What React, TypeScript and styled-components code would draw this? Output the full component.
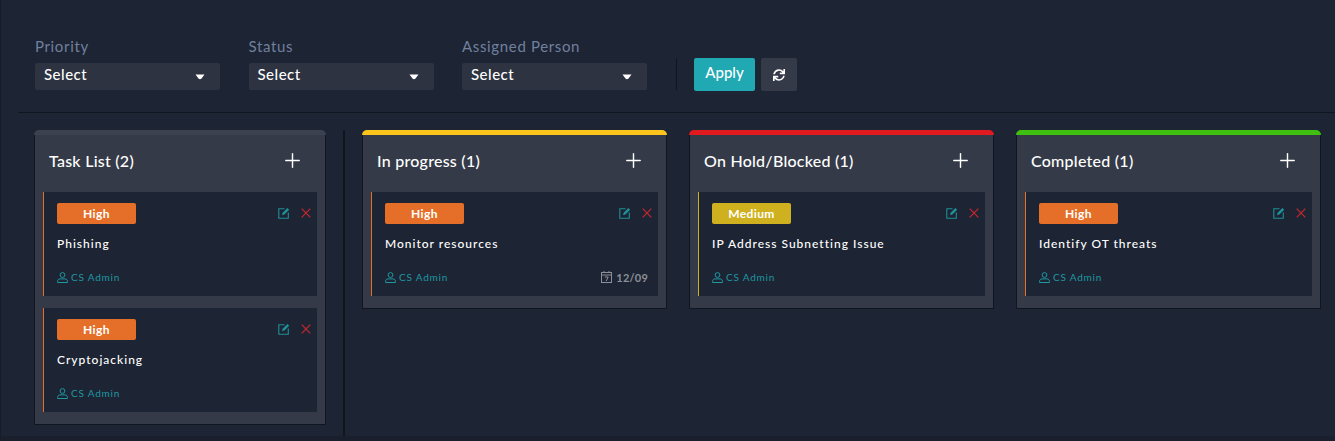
import styled, { createGlobalStyle } from "styled-components";
import { Plus } from "lucide-react";
import { FaSync } from "react-icons/fa";

const GlobalStyle = createGlobalStyle`
  html, body {
    margin: 0;
    padding: 0;
    background: #1d2433;
  }
  * {
    box-sizing: border-box;
  }
`;

const UserIcon = () => (
  <svg width="11" height="11" viewBox="0 0 11 11" fill="none" stroke="currentColor" strokeWidth="1">
    <circle cx="5.5" cy="3" r="2.4" />
    <path d="M0.6 10.5V9.2C0.6 7.8 1.7 6.9 3 6.9H8C9.3 6.9 10.4 7.8 10.4 9.2V10.5Z" strokeLinejoin="round" />
  </svg>
);

const EditIcon = () => (
  <svg width="12" height="12" viewBox="0 0 12 12" fill="none">
    <path d="M6.5 1.7H0.8V11.2H10.3V5.5" stroke="currentColor" strokeWidth="1.1" />
    <path d="M4 8.2L4.6 5.8L9.4 1L11.2 2.8L6.4 7.6Z" fill="currentColor" />
  </svg>
);

const CloseIcon = () => (
  <svg width="10" height="10" viewBox="0 0 10 10" fill="none">
    <path d="M0.7 0.7L9.3 9.3M9.3 0.7L0.7 9.3" stroke="currentColor" strokeWidth="1.2" />
  </svg>
);

const CalendarIcon = () => (
  <svg width="11" height="12" viewBox="0 0 11 12" fill="none" stroke="currentColor" strokeWidth="1">
    <rect x="0.5" y="1.5" width="10" height="10" />
    <path d="M0.5 4H10.5M3 0V2M8 0V2" />
    <path d="M3.8 6H7.2L5.2 10" />
  </svg>
);

const Caret = () => (
  <svg width="10" height="6" viewBox="0 0 10 6">
    <path d="M0.5 0.5H9.5L6.5 4.5Q5 6 3.5 4.5Z" fill="#ffffff" />
  </svg>
);

const filters = ["Priority", "Status", "Assigned Person"];

type Task = {
  title: string;
  priority: "High" | "Medium";
  due?: string;
};

type Column = {
  title: string;
  accent: string;
  width: number;
  tasks: Task[];
};

const columns: Column[] = [
  {
    title: "Task List (2)",
    accent: "#3c4250",
    width: 292,
    tasks: [
      { title: "Phishing", priority: "High" },
      { title: "Cryptojacking", priority: "High" },
    ],
  },
  {
    title: "In progress (1)",
    accent: "#fdc51c",
    width: 305,
    tasks: [{ title: "Monitor resources", priority: "High", due: "12/09" }],
  },
  {
    title: "On Hold/Blocked (1)",
    accent: "#e11a1f",
    width: 305,
    tasks: [{ title: "IP Address Subnetting Issue", priority: "Medium" }],
  },
  {
    title: "Completed (1)",
    accent: "#3fc010",
    width: 305,
    tasks: [{ title: "Identify OT threats", priority: "High" }],
  },
];

const priorityColor = (priority: Task["priority"]) => (priority === "High" ? "#e56f29" : "#cfb11f");

const TaskCard = ({ task }: { task: Task }) => (
  <Card $accent={priorityColor(task.priority)}>
    <CardTop>
      <Badge $color={priorityColor(task.priority)}>{task.priority}</Badge>
      <CardActions>
        <EditButton>
          <EditIcon />
        </EditButton>
        <DeleteButton>
          <CloseIcon />
        </DeleteButton>
      </CardActions>
    </CardTop>
    <CardTitle>{task.title}</CardTitle>
    <CardFooter>
      <Assignee>
        <UserIcon />
        <span>CS Admin</span>
      </Assignee>
      {task.due && (
        <DueDate>
          <CalendarIcon />
          <span>{task.due}</span>
        </DueDate>
      )}
    </CardFooter>
  </Card>
);

const BoardColumn = ({ column }: { column: Column }) => (
  <ColumnBox $width={column.width}>
    <ColumnAccent $accent={column.accent} />
    <ColumnBody>
      <ColumnHeader>
        <ColumnTitle>{column.title}</ColumnTitle>
        <AddButton>
          <Plus size={23} strokeWidth={1.5} />
        </AddButton>
      </ColumnHeader>
      <CardList>
        {column.tasks.map((task) => (
          <TaskCard key={task.title} task={task} />
        ))}
      </CardList>
    </ColumnBody>
  </ColumnBox>
);

export default function App() {
  const [first, ...rest] = columns;
  return (
    <>
      <GlobalStyle />
      <Page>
        <Main>
          <FilterBar>
            {filters.map((label) => (
              <Field key={label}>
                <FieldLabel>{label}</FieldLabel>
                <SelectBox>
                  <SelectText>Select</SelectText>
                  <Caret />
                </SelectBox>
              </Field>
            ))}
            <BarDivider />
            <ApplyButton>Apply</ApplyButton>
            <ResetButton>
              <FaSync size={12} />
            </ResetButton>
          </FilterBar>
          <Board>
            <BoardColumn column={first} />
            <BoardDivider />
            <Columns>
              {rest.map((column) => (
                <BoardColumn key={column.title} column={column} />
              ))}
            </Columns>
          </Board>
        </Main>
        <BottomBand />
      </Page>
    </>
  );
}

const Page = styled.div`
  width: 1335px;
  height: 441px;
  overflow: hidden;
  background: #1d2433;
  border-left: 1px solid #171c28;
  font-family: "Lato", "Liberation Sans", sans-serif;
`;

const Main = styled.main`
  margin-left: 17px;
`;

const BottomBand = styled.div`
  height: 5px;
  background: #191f2c;
`;

const FilterBar = styled.div`
  height: 113px;
  padding: 37px 0 0 17px;
  display: flex;
  align-items: flex-start;
  border-bottom: 1px solid #11151f;
`;

const Field = styled.div`
  width: 185px;
  margin-right: 28.5px;
  display: flex;
  flex-direction: column;
`;

const FieldLabel = styled.label`
  height: 18px;
  font-size: 15px;
  line-height: 18px;
  letter-spacing: 0.65px;
  color: #71809e;
`;

const SelectBox = styled.div`
  height: 27px;
  margin-top: 8px;
  padding: 0 15px 0 9px;
  display: flex;
  align-items: center;
  justify-content: space-between;
  background: #2d3340;
  border-radius: 2px;
`;

const SelectText = styled.span`
  padding-bottom: 6px;
  font-size: 15px;
  font-weight: 500;
  letter-spacing: 0.5px;
  color: #ffffff;
`;

const BarDivider = styled.div`
  width: 1px;
  height: 32px;
  margin: 21px 17px 0 0.5px;
  background: #11151f;
`;

const ApplyButton = styled.button`
  all: unset;
  box-sizing: border-box;
  width: 61px;
  height: 33px;
  margin-top: 21px;
  padding-bottom: 5px;
  display: flex;
  align-items: center;
  justify-content: center;
  background: #20a8b3;
  border-radius: 2px;
  font-size: 15px;
  font-weight: 500;
  color: #ffffff;
`;

const ResetButton = styled.button`
  all: unset;
  box-sizing: border-box;
  width: 36px;
  height: 33px;
  margin: 21px 0 0 6px;
  display: flex;
  align-items: center;
  justify-content: center;
  background: #343a48;
  border-radius: 2px;
  color: #ffffff;
`;

const Board = styled.div`
  height: 323px;
  padding: 17px 0 0 16px;
  display: flex;
  align-items: flex-start;
`;

const BoardDivider = styled.div`
  width: 2px;
  height: 306px;
  margin: 0 17px;
  background: #11151f;
`;

const Columns = styled.div`
  display: flex;
  align-items: flex-start;
  gap: 22px;
`;

const ColumnBox = styled.section<{ $width: number }>`
  width: ${({ $width }) => $width}px;
  display: flex;
  flex-direction: column;
`;

const ColumnAccent = styled.div<{ $accent: string }>`
  height: 5px;
  background: ${({ $accent }) => $accent};
  border-radius: 6px 6px 0 0;
`;

const ColumnBody = styled.div`
  background: #343a48;
  border: 1px solid #11151f;
  border-top: none;
  padding-bottom: 12px;
`;

const ColumnHeader = styled.header`
  height: 57px;
  padding: 0 21px 6px 14px;
  display: flex;
  align-items: center;
  justify-content: space-between;
`;

const ColumnTitle = styled.h3`
  margin: 0;
  font-size: 16px;
  font-weight: 500;
  letter-spacing: 0.25px;
  color: #ffffff;
`;

const AddButton = styled.button`
  all: unset;
  display: flex;
  color: #ffffff;
`;

const CardList = styled.div`
  padding: 0 8px;
  display: flex;
  flex-direction: column;
  gap: 12px;
`;

const Card = styled.article<{ $accent: string }>`
  height: 104px;
  padding: 11px 6px 0 13px;
  background: #1d2433;
  border-left: 1px solid ${({ $accent }) => $accent};
  display: flex;
  flex-direction: column;
`;

const CardTop = styled.div`
  display: flex;
  align-items: flex-start;
  justify-content: space-between;
`;

const Badge = styled.span<{ $color: string }>`
  width: 79px;
  height: 21px;
  padding-bottom: 1px;
  display: flex;
  align-items: center;
  justify-content: center;
  background: ${({ $color }) => $color};
  border-radius: 2px;
  font-size: 12px;
  font-weight: 700;
  letter-spacing: 0.4px;
  color: #ffffff;
`;

const CardActions = styled.div`
  padding-top: 4px;
  display: flex;
  align-items: center;
  gap: 11px;
`;

const EditButton = styled.span`
  display: flex;
  color: #1f8f98;
`;

const DeleteButton = styled.span`
  display: flex;
  color: #c9272f;
`;

const CardTitle = styled.div`
  margin-top: 12px;
  height: 16px;
  font-size: 12px;
  line-height: 16px;
  font-weight: 500;
  letter-spacing: 1px;
  color: #ffffff;
`;

const CardFooter = styled.div`
  height: 14px;
  margin-top: 18px;
  padding-right: 4px;
  display: flex;
  align-items: center;
  justify-content: space-between;
`;

const Assignee = styled.div`
  display: flex;
  align-items: center;
  gap: 3px;
  font-size: 10px;
  letter-spacing: 0.8px;
  color: #1f98a3;
`;

const DueDate = styled.div`
  display: flex;
  align-items: center;
  gap: 4px;
  font-size: 11px;
  font-weight: 700;
  letter-spacing: 0.2px;
  color: #8b8f97;
`;
